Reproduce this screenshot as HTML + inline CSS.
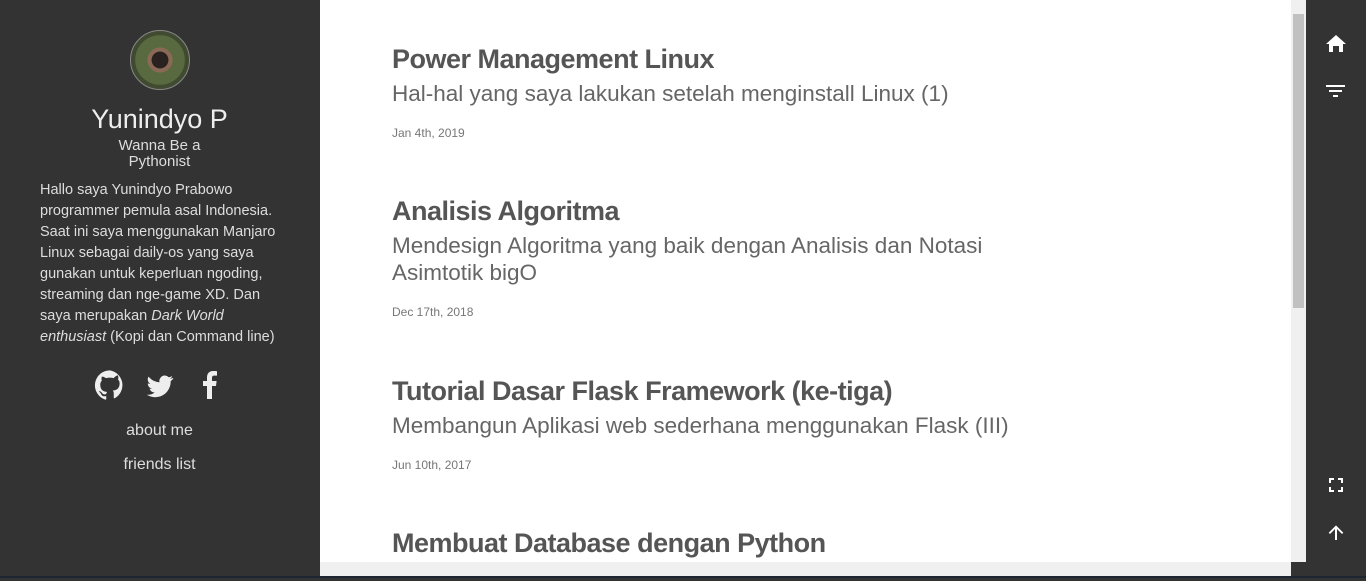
<!DOCTYPE html>
<html><head><meta charset="utf-8"><style>
*{margin:0;padding:0;box-sizing:border-box}
body{width:1366px;height:578px;overflow:hidden;background:#333;font-family:"Liberation Sans",sans-serif;position:relative}
#side{position:absolute;left:0;top:0;width:319px;height:576px;background:#333;color:#ddd;text-align:center}
.av{position:absolute;left:130px;top:30px;width:60px;height:60px;border-radius:50%;background:radial-gradient(circle at 50% 50%,#2a2220 0 20%,#8a6a55 21% 30%,#5a6a40 31% 60%,#3f4a30 61%);border:1px solid #888}
.name{position:absolute;top:104px;width:319px;font-size:27px;color:#eee}
.tag{position:absolute;top:138px;width:319px;font-size:15px;line-height:16px;color:#ddd}
.bio{position:absolute;left:40px;top:180px;width:250px;text-align:left;font-size:14.5px;line-height:21px;color:#ddd}
.icons{position:absolute;top:370px;left:0;width:319px}
.lnk{position:absolute;width:319px;font-size:16px;color:#ddd}
#main{position:absolute;left:320px;top:0;width:971px;height:562px;background:#fff;overflow:hidden}
.post{position:absolute;left:72px;width:660px}
.t{font-size:27px;font-weight:bold;color:#555;letter-spacing:-0.5px}
.s{font-size:22.5px;color:#666;line-height:27px;margin-top:5px}
.d{font-size:12px;color:#777;margin-top:19px}
#vs{position:absolute;left:1291px;top:0;width:15px;height:562px;background:#f0f0f0}
#vs .th{position:absolute;left:2px;top:14px;width:11px;height:294px;background:#c1c1c1}
#hs{position:absolute;left:320px;top:562px;width:971px;height:14px;background:#f0f0f0}
#right{position:absolute;left:1306px;top:0;width:60px;height:576px;background:#333}
#bot{position:absolute;left:0;top:576px;width:1366px;height:2px;background:#1d2530}
</style></head><body>
<div id="side">
<div class="av"></div>
<div class="name">Yunindyo P</div>
<div class="tag">Wanna Be a<br>Pythonist</div>
<div class="bio">Hallo saya Yunindyo Prabowo programmer pemula asal Indonesia. Saat ini saya menggunakan Manjaro Linux sebagai daily-os yang saya gunakan untuk keperluan ngoding, streaming dan nge-game XD. Dan saya merupakan <i>Dark World enthusiast</i> (Kopi dan Command line)</div>
<svg class="icons" width="319" height="32" viewBox="0 0 319 32">
<g fill="#eee">
<path transform="translate(95,0) scale(1.25)" d="M12 .3a12 12 0 0 0-3.8 23.4c.6.1.8-.3.8-.6v-2.2c-3.3.7-4-1.4-4-1.4-.6-1.4-1.4-1.8-1.4-1.8-1-.7.1-.7.1-.7 1.2.1 1.8 1.2 1.8 1.2 1 1.8 2.8 1.3 3.5 1 0-.8.4-1.3.7-1.6-2.7-.3-5.5-1.3-5.5-6 0-1.2.5-2.3 1.3-3.1-.2-.4-.6-1.6 0-3.2 0 0 1-.3 3.4 1.2a11.5 11.5 0 0 1 6 0C17.3 4 18.3 4.3 18.3 4.3c.7 1.6.2 2.8.1 3.2.8.8 1.3 1.9 1.3 3.1 0 4.6-2.8 5.6-5.5 5.9.4.4.8 1.1.8 2.2v3.3c0 .3.2.7.8.6A12 12 0 0 0 12 .3"/>
<path transform="translate(147,3) scale(1.1)" d="M23.6 4.6c-.9.4-1.8.6-2.8.8 1-.6 1.8-1.6 2.1-2.7-1 .6-2 1-3.1 1.2a4.9 4.9 0 0 0-8.4 4.5C7.4 8.2 3.8 6.2 1.4 3.3c-.4.7-.7 1.6-.7 2.5 0 1.7.9 3.2 2.2 4.1-.8 0-1.6-.2-2.200-.6v.1c0 2.4 1.7 4.4 3.9 4.8-.7.2-1.5.2-2.2.1.6 2 2.4 3.4 4.6 3.4a9.9 9.9 0 0 1-7.3 2A14 14 0 0 0 7.5 22c9 0 14-7.5 14-14v-.6c1-.7 1.8-1.6 2.5-2.5z"/>
<path transform="translate(199,0)" d="M13 29V16h4l.6-5H13V8c0-1.4.4-2.4 2.4-2.4H18V1.2c-.4-.1-2-.2-3.8-.2C10.6 1 8 3.2 8 7.3V11H4v5h4v13z"/>
</g></svg>
<div class="lnk" style="top:422px">about me</div>
<div class="lnk" style="top:456px">friends list</div>
</div>
<div id="main">
<div class="post" style="top:44px"><div class="t">Power Management Linux</div><div class="s">Hal-hal yang saya lakukan setelah menginstall Linux (1)</div><div class="d">Jan 4th, 2019</div></div>
<div class="post" style="top:196px"><div class="t">Analisis Algoritma</div><div class="s">Mendesign Algoritma yang baik dengan Analisis dan Notasi Asimtotik bigO</div><div class="d">Dec 17th, 2018</div></div>
<div class="post" style="top:376px;width:700px"><div class="t">Tutorial Dasar Flask Framework (ke-tiga)</div><div class="s">Membangun Aplikasi web sederhana menggunakan Flask (III)</div><div class="d">Jun 10th, 2017</div></div>
<div class="post" style="top:528px"><div class="t">Membuat Database dengan Python</div></div>
</div>
<div id="vs"><div class="th"></div></div>
<div id="hs"></div>
<div id="right">
<svg width="60" height="576" viewBox="0 0 60 576" fill="#fff">
<path d="M20 44l10-9 10 9h-3v8h-4v-6h-6v6h-4v-8z"/>
<rect x="20" y="85" width="19" height="2"/><rect x="23" y="90" width="13" height="2"/><rect x="27" y="95" width="5" height="2"/>
<path d="M23 478h5v2h-3v3h-2zM37 478h-5v2h3v3h2zM23 492h5v-2h-3v-3h-2zM37 492h-5v-2h3v-3h2z"/>
<path d="M29 540v-11l-5 5-1.3-1.3L30 525.4l7.3 7.3-1.3 1.3-5-5v11z"/>
</svg>
</div>
<div id="bot"></div>
</body></html>
